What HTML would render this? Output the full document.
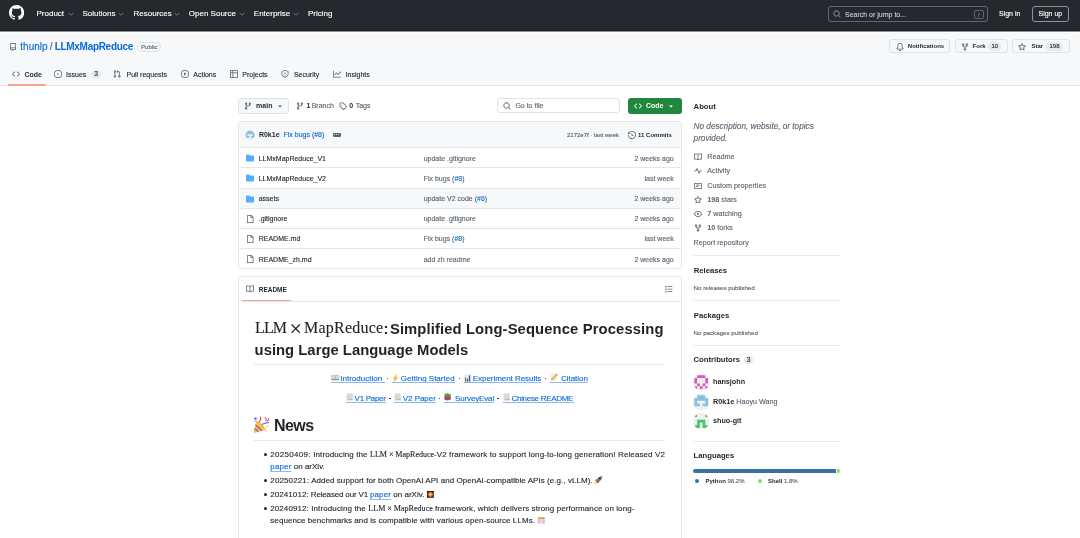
<!DOCTYPE html>
<html><head><meta charset="utf-8">
<style>
*{box-sizing:border-box;margin:0;padding:0}
html,body{width:1080px;height:538px;overflow:hidden;background:#fff}
body{font-family:"Liberation Sans",sans-serif;color:#1f2328;position:relative}
.a{position:absolute;white-space:nowrap}
svg{display:block}
.hdr{position:absolute;left:0;top:0;width:1080px;height:32px;background:#25292e;box-shadow:inset 0 -1px 0 #8d9094,inset 0 -2px 0 #1d2126}
.nav{color:#fff;font-size:8px;line-height:10px;top:9.3px}
.chev{position:absolute;top:11.5px}
.sub{position:absolute;left:0;top:32px;width:1080px;height:54px;box-shadow:inset 0 1px 0 #fdfdfe;background:#f6f8fa;border-bottom:1px solid #e0e4e9}
.btn{position:absolute;border:1px solid #dfe3e8;border-radius:3px;background:#f6f8fa}
.cnt{position:absolute;background:#e6eaef;border-radius:6px;font-size:6px;line-height:9px;text-align:center;font-weight:700;color:#1f2328}
.tab{font-size:7px;line-height:10px;top:69.8px;color:#1f2328}
.ico{position:absolute;fill:#59636e}
.box{position:absolute;border:1px solid #e4e7eb;border-radius:3px;overflow:hidden}
.row{position:absolute;left:0;width:443px;height:20.18px;border-top:1px solid #e3e7eb}
.fn{position:absolute;left:19.7px;top:5.5px;font-size:7px;line-height:10px;color:#1f2328}
.cm{position:absolute;left:184.7px;top:5.5px;font-size:7px;line-height:10px;color:#59636e}
.tm{position:absolute;right:8.3px;top:5.5px;font-size:7px;line-height:10px;color:#59636e}
.lk{color:#0969da}
.side{font-size:7.2px;line-height:10px;color:#59636e}
.sh{font-size:7.7px;line-height:10px;font-weight:700;color:#1f2328}
.sep{position:absolute;left:693px;width:147px;height:1px;background:#e8ebee}

.md a{color:#0969da;text-decoration:underline;text-decoration-thickness:0.5px;text-underline-offset:1.5px}
.li{position:relative;margin-bottom:2px}
.li::before{content:"";position:absolute;left:-6.2px;top:5px;width:2.4px;height:2.4px;border-radius:50%;background:#1f2328}
.mj{font-family:"Liberation Serif",serif;font-size:8.3px}
.emo{display:inline-block;vertical-align:-1px}
.wrap{will-change:transform}.wrap *{-webkit-text-stroke:0.12px currentColor}.wrap b,.wrap [style*="font-weight:700"],.sh,.fn[style*="font-weight:700"]{-webkit-text-stroke:0}</style></head><body><div class="wrap" style="position:absolute;left:0;top:0;width:1080px;height:538px;overflow:hidden">

<!-- header -->
<div class="hdr"></div>
<svg class="a" style="left:8.9px;top:5.4px" width="15.2" height="15.2" viewBox="0 0 16 16"><path fill="#fff" d="M8 0c4.42 0 8 3.58 8 8a8.013 8.013 0 0 1-5.45 7.59c-.4.08-.55-.17-.55-.38 0-.27.01-1.13.01-2.2 0-.75-.25-1.23-.54-1.48 1.780-.2 3.65-.88 3.65-3.950 0-.88-.31-1.59-.82-2.15.08-.2.36-1.02-.08-2.12 0 0-.67-.22-2.2.82-.64-.18-1.32-.27-2-.27-.68 0-1.36.09-2 .27-1.53-1.03-2.2-.82-2.2-.82-.44 1.1-.16 1.92-.08 2.12-.51.56-.82 1.28-.82 2.15 0 3.06 1.86 3.75 3.64 3.95-.23.2-.44.55-.51 1.07-.46.21-1.61.55-2.330-.66-.15-.24-.6-.83-1.23-.82-.67.01-.27.38.01.53.34.19.73.9.82 1.13.16.45.68 1.31 2.69.94 0 .67.01 1.3.01 1.49 0 .21-.15.45-.55.38A7.995 7.995 0 0 1 0 8c0-4.42 3.58-8 8-8Z"/></svg>
<div class="a nav" style="left:36.5px">Product</div>
<div class="a nav" style="left:82.5px">Solutions</div>
<div class="a nav" style="left:133.5px">Resources</div>
<div class="a nav" style="left:188.8px">Open Source</div>
<div class="a nav" style="left:253.8px">Enterprise</div>
<div class="a nav" style="left:308px">Pricing</div>
<svg class="chev" style="left:68px" width="6" height="4" viewBox="0 0 12 8"><path d="M1 1.5 6 6.5 11 1.5" fill="none" stroke="#9198a1" stroke-width="1.4"/></svg>
<svg class="chev" style="left:118px" width="6" height="4" viewBox="0 0 12 8"><path d="M1 1.5 6 6.5 11 1.5" fill="none" stroke="#9198a1" stroke-width="1.4"/></svg>
<svg class="chev" style="left:174px" width="6" height="4" viewBox="0 0 12 8"><path d="M1 1.5 6 6.5 11 1.5" fill="none" stroke="#9198a1" stroke-width="1.4"/></svg>
<svg class="chev" style="left:238.5px" width="6" height="4" viewBox="0 0 12 8"><path d="M1 1.5 6 6.5 11 1.5" fill="none" stroke="#9198a1" stroke-width="1.4"/></svg>
<svg class="chev" style="left:293px" width="6" height="4" viewBox="0 0 12 8"><path d="M1 1.5 6 6.5 11 1.5" fill="none" stroke="#9198a1" stroke-width="1.4"/></svg>

<div class="a" style="left:828.3px;top:6px;width:159.7px;height:16px;border:1px solid #5d656d;border-radius:3px"></div>
<svg class="a" style="left:833px;top:10px" width="8" height="8" viewBox="0 0 16 16"><path fill="#9198a1" d="M10.68 11.74a6 6 0 0 1-7.922-8.982 6 6 0 0 1 8.982 7.922l3.040 3.04a.749.749 0 0 1-.326 1.275.749.749 0 0 1-.734-.215ZM11.5 7a4.499 4.499 0 1 0-8.997 0A4.499 4.499 0 0 0 11.5 7Z"/></svg>
<div class="a" style="left:845px;top:9.5px;font-size:7px;line-height:10px;color:#c8ced5">Search or jump to...</div>
<div class="a" style="left:974px;top:9.5px;width:9.5px;height:9.5px;border:1px solid #5d656d;border-radius:2px;font-size:6px;line-height:8.5px;text-align:center;color:#9198a1">/</div>
<div class="a" style="left:999px;top:9.3px;font-size:7px;line-height:10px;color:#fff">Sign in</div>
<div class="a" style="left:1032.3px;top:6px;width:37px;height:15.7px;border:1px solid #8c959f;border-radius:3px"></div>
<div class="a" style="left:1038.5px;top:9.3px;font-size:7px;line-height:10px;color:#fff">Sign up</div>

<!-- subheader -->
<div class="sub"></div>
<svg class="a" style="left:9px;top:43px" width="8" height="8" viewBox="0 0 16 16"><path fill="#59636e" d="M2 2.5A2.5 2.5 0 0 1 4.5 0h8.75a.75.75 0 0 1 .75.75v12.5a.75.75 0 0 1-.75.75h-2.5a.75.75 0 0 1 0-1.5h1.75v-2h-8a1 1 0 0 0-.714 1.7.75.75 0 1 1-1.072 1.05A2.495 2.495 0 0 1 2 11.5Zm10.5-1h-8a1 1 0 0 0-1 1v6.708A2.486 2.486 0 0 1 4.5 9h8ZM5 12.25a.25.25 0 0 1 .25-.25h3.5a.25.25 0 0 1 .25.25v3.25a.25.25 0 0 1-.4.2l-1.45-1.087a.249.249 0 0 0-.3 0L5.4 15.7a.25.25 0 0 1-.4-.2Z"/></svg>
<div class="a" style="left:20.3px;top:41.3px;font-size:10px;line-height:11px;color:#0969da">thunlp</div>
<div class="a" style="left:49.8px;top:41.3px;font-size:10px;line-height:11px;color:#59636e">/</div>
<div class="a" style="left:54.7px;top:41.3px;font-size:10px;line-height:11px;color:#0969da;font-weight:700;letter-spacing:-0.3px">LLMxMapReduce</div>
<div class="a" style="left:137.2px;top:42px;width:24.3px;height:10px;border:1px solid #dfe3e8;border-radius:5px;font-size:6.1px;line-height:7.6px;text-align:center;color:#59636e">Public</div>

<div class="btn" style="left:889.3px;top:39.3px;width:61px;height:13.8px"></div>
<svg class="a" style="left:896px;top:42.5px" width="8" height="8" viewBox="0 0 16 16"><path fill="#59636e" d="M8 16a2 2 0 0 0 1.985-1.75c.017-.137-.097-.25-.235-.25h-3.5c-.138 0-.252.113-.235.25A2 2 0 0 0 8 16ZM3 5a5 5 0 0 1 10 0v2.947c0 .05.015.098.042.139l1.703 2.555A1.519 1.519 0 0 1 13.482 13H2.518a1.516 1.516 0 0 1-1.263-2.360l1.703-2.554A.255.255 0 0 0 3 7.947Zm5-3.5A3.500 3.5 0 0 0 4.5 5v2.947c0 .346-.102.683-.294.97l-1.703 2.556a.017.017 0 0 0-.003.01l.001.006c0 .002.002.004.004.006l.006.004.007.001h10.964l.007-.001.006-.004.004-.006.001-.007a.017.017 0 0 0-.003-.01l-1.703-2.554a1.745 1.745 0 0 1-.294-.97V5A3.5 3.5 0 0 0 8 1.5Z"/></svg>
<div class="a" style="left:907.8px;top:40.9px;font-size:6px;line-height:10px;font-weight:700;color:#1f2328">Notifications</div>

<div class="btn" style="left:954.6px;top:39.3px;width:53px;height:13.8px"></div>
<svg class="a" style="left:961px;top:42.5px" width="8" height="8" viewBox="0 0 16 16"><path fill="#59636e" d="M5 5.372v.878c0 .414.336.75.75.75h4.5a.75.75 0 0 0 .75-.75v-.878a2.25 2.25 0 1 1 1.5 0v.878a2.25 2.25 0 0 1-2.25 2.25h-1.5v2.128a2.251 2.251 0 1 1-1.5 0V8.5h-1.5A2.25 2.25 0 0 1 3.5 6.25v-.878a2.25 2.25 0 1 1 1.5 0ZM5 3.25a.75.75 0 1 0-1.5 0 .75.75 0 0 0 1.5 0Zm6.75.75a.75.75 0 1 0 0-1.5.75.75 0 0 0 0 1.5Zm-3 8.75a.75.75 0 1 0-1.5 0 .75.75 0 0 0 1.5 0Z"/></svg>
<div class="a" style="left:972.6px;top:40.9px;font-size:6px;line-height:10px;font-weight:700;color:#1f2328">Fork</div>
<div class="cnt" style="left:988.3px;top:42px;width:13px;height:9px;font-weight:400">10</div>

<div class="btn" style="left:1011.5px;top:39.3px;width:58px;height:13.8px"></div>
<svg class="a" style="left:1017.7px;top:42.5px" width="8" height="8" viewBox="0 0 16 16"><path fill="#59636e" d="M8 .25a.75.75 0 0 1 .673.418l1.882 3.815 4.21.612a.75.75 0 0 1 .416 1.279l-3.046 2.970.719 4.192a.751.751 0 0 1-1.088.791L8 12.347l-3.766 1.98a.75.75 0 0 1-1.088-.79l.72-4.194L.818 6.374a.75.75 0 0 1 .416-1.28l4.21-.611L7.327.668A.75.75 0 0 1 8 .25Zm0 2.445L6.615 5.5a.75.75 0 0 1-.564.41l-3.097.45 2.240 2.184a.75.75 0 0 1 .216.664l-.528 3.084 2.769-1.456a.75.75 0 0 1 .698 0l2.77 1.456-.53-3.084a.75.75 0 0 1 .216-.664l2.24-2.183-3.096-.45a.75.75 0 0 1-.564-.41L8 2.694Z"/></svg>
<div class="a" style="left:1031.5px;top:40.9px;font-size:6px;line-height:10px;font-weight:700;color:#1f2328">Star</div>
<div class="cnt" style="left:1046px;top:42px;width:17px;height:9px;font-weight:400">198</div>

<!-- tabs -->
<svg class="a ico" style="left:12px;top:70.3px" width="8" height="8" viewBox="0 0 16 16"><path d="m11.28 3.22 4.25 4.25a.75.75 0 0 1 0 1.06l-4.25 4.25a.749.749 0 0 1-1.275-.326.749.749 0 0 1 .215-.734L13.94 8l-3.72-3.720a.749.749 0 0 1 .326-1.275.749.749 0 0 1 .734.215Zm-6.56 0a.751.751 0 0 1 1.042.018.751.751 0 0 1 .018 1.042L2.060 8l3.72 3.72a.749.749 0 0 1-.326 1.275.749.749 0 0 1-.734-.215L.47 8.53a.75.75 0 0 1 0-1.06Z"/></svg>
<div class="a tab" style="left:24.4px;font-weight:700">Code</div>
<div class="a" style="left:8.3px;top:84.2px;width:37.4px;height:1.6px;background:#f6a490;border-radius:1px"></div>
<svg class="a ico" style="left:53.7px;top:70.3px" width="8" height="8" viewBox="0 0 16 16"><path d="M8 9.5a1.5 1.5 0 1 0 0-3 1.5 1.5 0 0 0 0 3Z"/><path d="M8 0a8 8 0 1 1 0 16A8 8 0 0 1 8 0ZM1.5 8a6.5 6.5 0 1 0 13 0 6.5 6.5 0 0 0-13 0Z"/></svg>
<div class="a tab" style="left:66.1px">Issues</div>
<div class="cnt" style="left:91px;top:70px;width:10px;height:8.7px;font-weight:400;line-height:8.7px;font-size:6.6px">3</div>
<svg class="a ico" style="left:113px;top:70.3px" width="8" height="8" viewBox="0 0 16 16"><path d="M1.5 3.25a2.25 2.25 0 1 1 3 2.122v5.256a2.251 2.251 0 1 1-1.5 0V5.372A2.25 2.25 0 0 1 1.5 3.25Zm5.677-.177L9.573.677A.25.25 0 0 1 10 .854V2.5h1A2.5 2.5 0 0 1 13.5 5v5.628a2.251 2.251 0 1 1-1.5 0V5a1 1 0 0 0-1-1h-1v1.646a.25.25 0 0 1-.427.177L7.177 3.427a.25.25 0 0 1 0-.354ZM3.75 2.5a.75.75 0 1 0 0 1.5.75.75 0 0 0 0-1.5Zm0 9.5a.75.75 0 1 0 0 1.5.75.75 0 0 0 0-1.5Zm8.25.75a.75.75 0 1 0 1.5 0 .75.75 0 0 0-1.5 0Z"/></svg>
<div class="a tab" style="left:126.5px">Pull requests</div>
<svg class="a ico" style="left:180.6px;top:70.3px" width="8" height="8" viewBox="0 0 16 16"><path d="M8 0a8 8 0 1 1 0 16A8 8 0 0 1 8 0ZM1.5 8a6.5 6.5 0 1 0 13 0 6.5 6.5 0 0 0-13 0Zm4.879-2.773 4.264 2.559a.25.25 0 0 1 0 .428l-4.264 2.559A.25.25 0 0 1 6 10.559V5.442a.25.25 0 0 1 .379-.215Z"/></svg>
<div class="a tab" style="left:193.3px">Actions</div>
<svg class="a ico" style="left:229.5px;top:70.3px" width="8" height="8" viewBox="0 0 16 16"><path d="M0 1.75C0 .784.784 0 1.75 0h12.5C15.216 0 16 .784 16 1.75v12.5A1.75 1.75 0 0 1 14.25 16H1.75A1.75 1.75 0 0 1 0 14.25ZM6.5 6.5v8h7.75a.25.25 0 0 0 .25-.25V6.5Zm8-1.5V1.75a.25.25 0 0 0-.25-.25H6.5V5Zm-13 1.5v7.750c0 .138.112.25.25.25H5v-8ZM5 5V1.5H1.75a.25.25 0 0 0-.25.25V5Z"/></svg>
<div class="a tab" style="left:242.3px">Projects</div>
<svg class="a ico" style="left:280.7px;top:70.3px" width="8" height="8" viewBox="0 0 16 16"><path d="M7.467.133a1.748 1.748 0 0 1 1.066 0l5.25 1.68A1.75 1.75 0 0 1 15 3.48V7c0 1.566-.32 3.182-1.303 4.682-.983 1.498-2.585 2.813-5.032 3.855a1.697 1.697 0 0 1-1.33 0c-2.447-1.042-4.049-2.357-5.032-3.855C1.32 10.182 1 8.566 1 7V3.48a1.755 1.755 0 0 1 1.217-1.667Zm.61 1.429a.25.25 0 0 0-.153 0l-5.25 1.68a.25.25 0 0 0-.174.238V7c0 1.358.275 2.666 1.057 3.86.784 1.194 2.121 2.34 4.366 3.297a.196.196 0 0 0 .154 0c2.245-.956 3.582-2.104 4.366-3.298C13.225 9.666 13.500 8.36 13.5 7V3.48a.251.251 0 0 0-.174-.237l-5.25-1.68ZM8.75 4.75v3a.75.75 0 0 1-1.5 0v-3a.75.75 0 0 1 1.5 0ZM9 10.5a1 1 0 1 1-2 0 1 1 0 0 1 2 0Z"/></svg>
<div class="a tab" style="left:293.9px">Security</div>
<svg class="a ico" style="left:332.5px;top:70.3px" width="8" height="8" viewBox="0 0 16 16"><path d="M1.5 1.75V13.5h13.75a.75.75 0 0 1 0 1.5H.75a.75.75 0 0 1-.75-.75V1.75a.75.75 0 0 1 1.5 0Zm14.28 2.53-5.25 5.25a.75.75 0 0 1-1.06 0L7 7.06 4.28 9.78a.751.751 0 0 1-1.042-.018.751.751 0 0 1-.018-1.042l3.25-3.25a.75.75 0 0 1 1.06 0L10 7.94l4.72-4.72a.751.751 0 0 1 1.042.018.751.751 0 0 1 .018 1.042Z"/></svg>
<div class="a tab" style="left:345.6px">Insights</div>

<!-- branch bar -->
<div class="btn" style="left:238.2px;top:98.2px;width:51.3px;height:15.4px"></div>
<svg class="a ico" style="left:243.7px;top:101.9px" width="8" height="8" viewBox="0 0 16 16"><path d="M9.5 3.25a2.25 2.25 0 1 1 3 2.122V6A2.5 2.5 0 0 1 10 8.5H6a1 1 0 0 0-1 1v1.128a2.251 2.251 0 1 1-1.5 0V5.372a2.25 2.25 0 1 1 1.5 0v1.836A2.493 2.493 0 0 1 6 7h4a1 1 0 0 0 1-1v-.628A2.25 2.25 0 0 1 9.5 3.25Zm-6 0a.75.75 0 1 0 1.5 0 .75.75 0 0 0-1.5 0Zm8.25-.75a.75.75 0 1 0 0 1.5.75.75 0 0 0 0-1.5ZM4.25 12a.75.75 0 1 0 0 1.5.75.75 0 0 0 0-1.5Z"/></svg>
<div class="a" style="left:256.1px;top:100.8px;font-size:7px;line-height:10px;font-weight:700">main</div>
<svg class="a ico" style="left:275.7px;top:101.9px" width="8" height="8" viewBox="0 0 16 16"><path d="m4.427 7.427 3.396 3.396a.25.25 0 0 0 .354 0l3.396-3.396A.25.25 0 0 0 11.396 7H4.604a.25.25 0 0 0-.177.427Z"/></svg>
<svg class="a ico" style="left:296px;top:101.9px" width="8" height="8" viewBox="0 0 16 16"><path d="M9.5 3.25a2.25 2.25 0 1 1 3 2.122V6A2.5 2.5 0 0 1 10 8.5H6a1 1 0 0 0-1 1v1.128a2.251 2.251 0 1 1-1.5 0V5.372a2.25 2.25 0 1 1 1.5 0v1.836A2.493 2.493 0 0 1 6 7h4a1 1 0 0 0 1-1v-.628A2.25 2.25 0 0 1 9.5 3.25Zm-6 0a.75.75 0 1 0 1.5 0 .75.75 0 0 0-1.5 0Zm8.25-.75a.75.75 0 1 0 0 1.5.75.75 0 0 0 0-1.5ZM4.25 12a.75.75 0 1 0 0 1.5.75.75 0 0 0 0-1.5Z"/></svg>
<div class="a" style="left:306.5px;top:100.8px;font-size:7px;line-height:10px;font-weight:700">1</div>
<div class="a" style="left:311.7px;top:100.8px;font-size:7px;line-height:10px;color:#59636e">Branch</div>
<svg class="a ico" style="left:339.3px;top:101.9px" width="8" height="8" viewBox="0 0 16 16"><path d="M1 7.775V2.75C1 1.784 1.784 1 2.75 1h5.025c.464 0 .91.184 1.238.513l6.25 6.25a1.75 1.75 0 0 1 0 2.474l-5.026 5.026a1.75 1.75 0 0 1-2.474 0l-6.25-6.25A1.752 1.752 0 0 1 1 7.775Zm1.5 0c0 .066.026.13.073.177l6.25 6.25a.25.25 0 0 0 .354 0l5.025-5.025a.25.25 0 0 0 0-.354l-6.25-6.25a.25.25 0 0 0-.177-.073H2.75a.25.25 0 0 0-.25.25ZM6 5a1 1 0 1 1 0 2 1 1 0 0 1 0-2Z"/></svg>
<div class="a" style="left:349.2px;top:100.8px;font-size:7px;line-height:10px;font-weight:700">0</div>
<div class="a" style="left:355.7px;top:100.8px;font-size:7px;line-height:10px;color:#59636e">Tags</div>

<div class="a" style="left:497.4px;top:98px;width:122.2px;height:15.4px;border:1px solid #dfe3e8;border-radius:3px;background:#fff"></div>
<svg class="a ico" style="left:503px;top:101.8px" width="8" height="8" viewBox="0 0 16 16"><path d="M10.68 11.74a6 6 0 0 1-7.922-8.982 6 6 0 0 1 8.982 7.922l3.040 3.04a.749.749 0 0 1-.326 1.275.749.749 0 0 1-.734-.215ZM11.5 7a4.499 4.499 0 1 0-8.997 0A4.499 4.499 0 0 0 11.5 7Z"/></svg>
<div class="a" style="left:515.4px;top:100.7px;font-size:7px;line-height:10px;color:#59636e">Go to file</div>
<div class="a" style="left:628px;top:98px;width:53.6px;height:15.8px;border-radius:3px;background:#1f883d"></div>
<svg class="a" style="left:634px;top:102px" width="8" height="8" viewBox="0 0 16 16"><path fill="#fff" d="m11.28 3.22 4.25 4.25a.75.75 0 0 1 0 1.06l-4.25 4.25a.749.749 0 0 1-1.275-.326.749.749 0 0 1 .215-.734L13.94 8l-3.72-3.720a.749.749 0 0 1 .326-1.275.749.749 0 0 1 .734.215Zm-6.56 0a.751.751 0 0 1 1.042.018.751.751 0 0 1 .018 1.042L2.060 8l3.72 3.72a.749.749 0 0 1-.326 1.275.749.749 0 0 1-.734-.215L.47 8.53a.75.75 0 0 1 0-1.06Z"/></svg>
<div class="a" style="left:645.9px;top:100.7px;font-size:7px;line-height:10px;font-weight:700;color:#fff">Code</div>
<svg class="a" style="left:667px;top:101.8px" width="8" height="8" viewBox="0 0 16 16"><path fill="#fff" d="m4.427 7.427 3.396 3.396a.25.25 0 0 0 .354 0l3.396-3.396A.25.25 0 0 0 11.396 7H4.604a.25.25 0 0 0-.177.427Z"/></svg>

<!-- file table -->
<div class="box" style="left:238px;top:121px;width:444px;height:148px">
  <div style="position:absolute;left:0;top:0;width:443px;height:26.2px;background:#f6f8fa"></div>
  <svg class="a" style="left:5.60px;top:8.40px" width="10.2" height="10.2" viewBox="0 0 420 420"><clipPath id="c6.69.2"><circle cx="210" cy="210" r="210"/></clipPath><g clip-path="url(#c6.69.2)"><rect width="420" height="420" fill="#f0f0f0"/><path d="M105 35h70v70h-70ZM175 35h70v70h-70ZM245 35h70v70h-70ZM35 105h70v70h-70ZM105 105h70v70h-70ZM175 105h70v70h-70ZM245 105h70v70h-70ZM315 105h70v70h-70ZM35 175h70v70h-70ZM315 175h70v70h-70ZM35 245h70v70h-70ZM105 245h70v70h-70ZM245 245h70v70h-70ZM315 245h70v70h-70Z" fill="#8cc1dd"/></g><circle cx="210" cy="210" r="208" fill="none" stroke="#e3e6e9" stroke-width="8"/></svg>
  <div class="a" style="left:19.90px;top:8.20px;font-size:7px;line-height:10px;font-weight:700">R0k1e</div>
  <div class="a" style="left:44.50px;top:8.20px;font-size:7px;line-height:10px;color:#0969da">Fix bugs (#8)</div>
  <div class="a" style="left:93.50px;top:10.60px;width:8px;height:4.4px;border-radius:1.2px;background:#59636e"></div>
  <div class="a" style="left:95.00px;top:12.20px;width:1.1px;height:1.1px;background:#fff;border-radius:50%"></div>
  <div class="a" style="left:97.00px;top:12.20px;width:1.1px;height:1.1px;background:#fff;border-radius:50%"></div>
  <div class="a" style="left:99.00px;top:12.20px;width:1.1px;height:1.1px;background:#fff;border-radius:50%"></div>
  <div class="a" style="left:328.00px;top:8.40px;font-size:6px;line-height:10px;color:#59636e">2172e7f · last week</div>
  <svg class="a ico" style="left:388.80px;top:9.40px" width="8" height="8" viewBox="0 0 16 16"><path d="m.427 1.927 1.215 1.215a8.002 8.002 0 1 1-1.6 5.685.75.75 0 1 1 1.493-.154 6.5 6.5 0 1 0 1.18-4.458l1.358 1.358A.25.25 0 0 1 3.896 6H.25A.25.25 0 0 1 0 5.750V2.104a.25.25 0 0 1 .427-.177ZM7.75 4a.75.75 0 0 1 .75.75v2.992l2.028.812a.75.75 0 0 1-.557 1.392l-2.5-1A.751.751 0 0 1 7 8.25v-3.5A.75.75 0 0 1 7.75 4Z"/></svg>
  <div class="a" style="left:399.10px;top:8.40px;font-size:6px;line-height:10px;font-weight:700">11 Commits</div>
  <div class="row" style="top:25.20px;"><svg class="a" style="left:6.9px;top:6.1px" width="8" height="8" viewBox="0 0 16 16"><path fill="#54aeff" d="M1.75 1A1.75 1.75 0 0 0 0 2.75v10.5C0 14.216.784 15 1.75 15h12.5A1.75 1.75 0 0 0 16 13.25v-8.5A1.75 1.75 0 0 0 14.25 3H7.5a.25.25 0 0 1-.2-.1l-.9-1.2C6.07 1.26 5.55 1 5 1H1.75Z"/></svg><div class="fn">LLMxMapReduce_V1</div><div class="cm">update .gitignore</div><div class="tm">2 weeks ago</div></div>
<div class="row" style="top:45.38px;"><svg class="a" style="left:6.9px;top:6.1px" width="8" height="8" viewBox="0 0 16 16"><path fill="#54aeff" d="M1.75 1A1.75 1.75 0 0 0 0 2.75v10.5C0 14.216.784 15 1.75 15h12.5A1.75 1.75 0 0 0 16 13.25v-8.5A1.75 1.75 0 0 0 14.25 3H7.5a.25.25 0 0 1-.2-.1l-.9-1.2C6.07 1.26 5.55 1 5 1H1.75Z"/></svg><div class="fn">LLMxMapReduce_V2</div><div class="cm">Fix bugs (<span class="lk">#8</span>)</div><div class="tm">last week</div></div>
<div class="row" style="top:65.56px;background:#f6f8fa;"><svg class="a" style="left:6.9px;top:6.1px" width="8" height="8" viewBox="0 0 16 16"><path fill="#54aeff" d="M1.75 1A1.75 1.75 0 0 0 0 2.75v10.5C0 14.216.784 15 1.75 15h12.5A1.75 1.75 0 0 0 16 13.25v-8.5A1.75 1.75 0 0 0 14.25 3H7.5a.25.25 0 0 1-.2-.1l-.9-1.2C6.07 1.26 5.55 1 5 1H1.75Z"/></svg><div class="fn">assets</div><div class="cm">update V2 code (<span class="lk">#6</span>)</div><div class="tm">2 weeks ago</div></div>
<div class="row" style="top:85.74px;"><svg class="a ico" style="left:6.9px;top:6.1px" width="8" height="8" viewBox="0 0 16 16"><path d="M2 1.75C2 .784 2.784 0 3.75 0h6.586c.464 0 .909.184 1.237.513l2.914 2.914c.329.328.513.773.513 1.237v9.586A1.75 1.75 0 0 1 13.25 16h-9.5A1.75 1.75 0 0 1 2 14.25Zm1.75-.25a.25.25 0 0 0-.25.25v12.5c0 .138.112.25.25.25h9.5a.25.25 0 0 0 .25-.25V6h-2.750A1.75 1.75 0 0 1 9 4.25V1.5Zm6.75.062V4.25c0 .138.112.25.25.25h2.688l-.011-.013-2.914-2.914-.013-.011Z"/></svg><div class="fn">.gitignore</div><div class="cm">update .gitignore</div><div class="tm">2 weeks ago</div></div>
<div class="row" style="top:105.92px;"><svg class="a ico" style="left:6.9px;top:6.1px" width="8" height="8" viewBox="0 0 16 16"><path d="M2 1.75C2 .784 2.784 0 3.75 0h6.586c.464 0 .909.184 1.237.513l2.914 2.914c.329.328.513.773.513 1.237v9.586A1.75 1.75 0 0 1 13.25 16h-9.5A1.75 1.75 0 0 1 2 14.25Zm1.75-.25a.25.25 0 0 0-.25.25v12.5c0 .138.112.25.25.25h9.5a.25.25 0 0 0 .25-.25V6h-2.750A1.75 1.75 0 0 1 9 4.25V1.5Zm6.75.062V4.25c0 .138.112.25.25.25h2.688l-.011-.013-2.914-2.914-.013-.011Z"/></svg><div class="fn">README.md</div><div class="cm">Fix bugs (<span class="lk">#8</span>)</div><div class="tm">last week</div></div>
<div class="row" style="top:126.10px;"><svg class="a ico" style="left:6.9px;top:6.1px" width="8" height="8" viewBox="0 0 16 16"><path d="M2 1.75C2 .784 2.784 0 3.75 0h6.586c.464 0 .909.184 1.237.513l2.914 2.914c.329.328.513.773.513 1.237v9.586A1.75 1.75 0 0 1 13.25 16h-9.5A1.75 1.75 0 0 1 2 14.25Zm1.75-.25a.25.25 0 0 0-.25.25v12.5c0 .138.112.25.25.25h9.5a.25.25 0 0 0 .25-.25V6h-2.750A1.75 1.75 0 0 1 9 4.25V1.5Zm6.75.062V4.25c0 .138.112.25.25.25h2.688l-.011-.013-2.914-2.914-.013-.011Z"/></svg><div class="fn">README_zh.md</div><div class="cm">add zh readme</div><div class="tm">2 weeks ago</div></div>

</div>

<!-- readme -->
<div class="box" style="left:238px;top:276px;width:444px;height:300px;background:#fff"></div>
<div class="a" style="left:238.5px;top:300.6px;width:443px;height:1px;background:#e3e7eb"></div>
<div class="a" style="left:242px;top:299.8px;width:49px;height:1.6px;background:#f6a490;border-radius:1px"></div>
<svg class="a ico" style="left:246.2px;top:284.6px" width="8" height="8" viewBox="0 0 16 16"><path d="M0 1.75A.75.75 0 0 1 .75 1h4.253c1.227 0 2.317.59 3 1.501A3.743 3.743 0 0 1 11.006 1h4.245a.75.75 0 0 1 .75.75v10.5a.75.75 0 0 1-.75.75h-4.507a2.25 2.25 0 0 0-1.591.659l-.622.621a.75.75 0 0 1-1.060 0l-.622-.621A2.25 2.25 0 0 0 5.258 13H.75a.75.75 0 0 1-.75-.75Zm7.251 10.324.004-5.073-.002-2.253A2.25 2.25 0 0 0 5.003 2.5H1.5v9h3.757a3.75 3.75 0 0 1 1.994.574ZM8.755 4.75l-.004 7.322a3.752 3.752 0 0 1 1.992-.572H14.5v-9h-3.495a2.25 2.25 0 0 0-2.25 2.25Z"/></svg>
<div class="a" style="left:258.7px;top:284.7px;font-size:6.5px;line-height:10px;font-weight:700">README</div>
<svg class="a ico" style="left:664.5px;top:284.9px" width="8" height="8" viewBox="0 0 16 16"><path d="M5.75 2.5h8.5a.75.75 0 0 1 0 1.5h-8.5a.75.75 0 0 1 0-1.5Zm0 5h8.5a.75.75 0 0 1 0 1.5h-8.5a.75.75 0 0 1 0-1.5Zm0 5h8.5a.75.75 0 0 1 0 1.5h-8.5a.75.75 0 0 1 0-1.5Z"/><circle cx="2" cy="3.25" r="1.5"/><circle cx="2" cy="8.25" r="1.5"/><circle cx="2" cy="13.25" r="1.5"/></svg>

<div class="a" style="letter-spacing:-0.860px;left:255.0px;top:318.30px;font-size:16px;line-height:20.2px;white-space:pre;font-family:'Liberation Serif',serif">LLM</div>
<svg class="a" style="left:290.6px;top:324.2px" width="9.4" height="9.4" viewBox="0 0 10 10"><path d="M0.6 0.6 9.4 9.4M9.4 0.6 0.6 9.4" stroke="#1f2328" stroke-width="1.35"/></svg>
<div class="a" style="letter-spacing:0.232px;left:304.0px;top:318.30px;font-size:16px;line-height:20.2px;white-space:pre;font-family:'Liberation Serif',serif">MapReduce</div>
<div class="a" style="left:383.4px;top:319.37px;font-size:14.8px;line-height:20.2px;white-space:pre;font-weight:700">:</div>
<div class="a" style="letter-spacing:0.115px;left:389.9px;top:319.37px;font-size:14.8px;line-height:20.2px;white-space:pre;font-weight:700">Simplified Long-Sequence Processing</div>
<div class="a" style="letter-spacing:0.025px;left:254.6px;top:339.57px;font-size:14.8px;line-height:20.2px;white-space:pre;font-weight:700">using Large Language Models</div>
<div class="a" style="left:254px;top:364px;width:411px;height:1px;background:#e6e9ec"></div>

<svg class="a" style="left:331px;top:374px" width="8.5" height="7" viewBox="0 0 19 16"><path d="M1 3.5 Q5 2 9.3 3.5 V12.5 Q5 11 1 12.5Z" fill="#d9dbdd" stroke="#8c9196" stroke-width="0.9"/><path d="M9.7 3.5 Q14 2 18 3.5 V12.5 Q14 11 9.7 12.5Z" fill="#d9dbdd" stroke="#8c9196" stroke-width="0.9"/><path d="M1 12.5 Q5 11 9.5 12.5 Q14 11 18 12.5 V14.5 H1Z" fill="#5f7f7a"/></svg>
<div class="a" style="left:340.3px;top:374.33px;font-size:8px;line-height:10px;color:#0969da">Introduction</div>
<div class="a" style="left:330.8px;top:382.2px;width:54.5px;height:0.8px;background:#8fb8ec"></div>
<div class="a" style="left:386.6px;top:377.5px;width:1.6px;height:1.6px;border-radius:50%;background:#1f2328"></div>
<svg class="a" style="left:392.2px;top:373.6px" width="6.8" height="8.6" viewBox="0 0 14 18"><path d="M10 0 2 10h4.5L3.5 18 12 7H7.5Z" fill="#f7c02b" stroke="#f29a1a" stroke-width="0.6"/></svg>
<div class="a" style="left:400.8px;top:374.33px;font-size:8px;line-height:10px;color:#0969da">Getting Started</div>
<div class="a" style="left:392px;top:382.2px;width:63.0px;height:0.8px;background:#8fb8ec"></div>
<div class="a" style="left:458.8px;top:377.5px;width:1.6px;height:1.6px;border-radius:50%;background:#1f2328"></div>
<svg class="a" style="left:463.8px;top:373.8px" width="7.2" height="8.2" viewBox="0 0 16 17"><rect x="0.5" y="0.5" width="15" height="16" fill="#e9ecef"/><rect x="2" y="7" width="2.8" height="9.5" fill="#2fa53a"/><rect x="6.4" y="10" width="2.8" height="6.5" fill="#d8262b"/><rect x="10.8" y="2.5" width="3" height="14" fill="#1b5fbf"/></svg>
<div class="a" style="left:472.8px;top:374.33px;font-size:8px;line-height:10px;color:#0969da;letter-spacing:-0.05px">Experiment Results</div>
<div class="a" style="left:463.5px;top:382.2px;width:77.8px;height:0.8px;background:#8fb8ec"></div>
<div class="a" style="left:544.6px;top:377.5px;width:1.6px;height:1.6px;border-radius:50%;background:#1f2328"></div>
<svg class="a" style="left:550px;top:373.3px" width="8.2" height="8.6" viewBox="0 0 17 17"><rect x="1" y="1" width="13" height="15" fill="#ececec"/><path d="M3 14.5 4 10.5 12.5 2 15 4.5 6.5 13Z" fill="#f2c12e" stroke="#c98a1a" stroke-width="0.6"/><path d="M12.5 2 14 0.8 16.2 3 15 4.5Z" fill="#e9788a"/></svg>
<div class="a" style="left:560.9px;top:374.33px;font-size:8px;line-height:10px;color:#0969da">Citation</div>
<div class="a" style="left:550px;top:382.2px;width:38.2px;height:0.8px;background:#8fb8ec"></div>
<svg class="a" style="left:345.7px;top:393.2px" width="7.3" height="7.6" viewBox="0 0 15 16"><path d="M1 1H14V13Q8 12.5 1 15Z" fill="#d8d8d8"/><path d="M1 15Q8 12.5 14 13V15.5H1Z" fill="#9a9a9a"/></svg>
<div class="a" style="left:354.6px;top:393.83px;font-size:8px;line-height:10px;color:#0969da;letter-spacing:-0.3px">V1 Paper</div>
<div class="a" style="left:345.7px;top:402.2px;width:40.0px;height:0.8px;background:#8fb8ec"></div>
<div class="a" style="left:389.0px;top:397.6px;width:1.6px;height:1.6px;border-radius:50%;background:#1f2328"></div>
<svg class="a" style="left:394.3px;top:393.2px" width="7.3" height="7.6" viewBox="0 0 15 16"><path d="M1 1H14V13Q8 12.5 1 15Z" fill="#d8d8d8"/><path d="M1 15Q8 12.5 14 13V15.5H1Z" fill="#9a9a9a"/></svg>
<div class="a" style="left:402.8px;top:393.83px;font-size:8px;line-height:10px;color:#0969da;letter-spacing:-0.05px">V2 Paper</div>
<div class="a" style="left:394.4px;top:402.2px;width:41.4px;height:0.8px;background:#8fb8ec"></div>
<div class="a" style="left:438.9px;top:397.6px;width:1.6px;height:1.6px;border-radius:50%;background:#1f2328"></div>
<svg class="a" style="left:444.3px;top:393.4px" width="7.2" height="7.6" viewBox="0 0 15 16"><path d="M1 9 L7 7 L14 9 L14 14 L7 16 L1 14Z" fill="#6a5fb8"/><path d="M1 6 L7 4.5 L14 6 L14 11 L7 12.5 L1 11Z" fill="#d6393a"/><path d="M0.5 2.5 L7 0.5 L14.5 3 L14 6.5 L7 8 L1 6Z" fill="#3eab43"/></svg>
<div class="a" style="left:455px;top:393.83px;font-size:8px;line-height:10px;color:#0969da;letter-spacing:-0.14px">SurveyEval</div>
<div class="a" style="left:444px;top:402.2px;width:50.1px;height:0.8px;background:#8fb8ec"></div>
<div class="a" style="left:497.3px;top:397.6px;width:1.6px;height:1.6px;border-radius:50%;background:#1f2328"></div>
<svg class="a" style="left:502.6px;top:393.2px" width="7.3" height="7.6" viewBox="0 0 15 16"><path d="M1 1H14V13Q8 12.5 1 15Z" fill="#d8d8d8"/><path d="M1 15Q8 12.5 14 13V15.5H1Z" fill="#9a9a9a"/></svg>
<div class="a" style="left:511.5px;top:393.83px;font-size:8px;line-height:10px;color:#0969da;letter-spacing:-0.3px">Chinese README</div>
<div class="a" style="left:502.6px;top:402.2px;width:71.1px;height:0.8px;background:#8fb8ec"></div>

<svg class="a" style="left:253.4px;top:416.3px" width="17.6" height="17.6" viewBox="0 0 34 34">
<path d="M1 33 L6.5 9 Q16 13 25 26 Z" fill="#f4c12f"/>
<path d="M6.5 9 Q16 13 25 26 Q22 24 18 20 Q12 14 6.5 9Z" fill="#e7a52a"/>
<path d="M4.6 17.5 Q12 21 16.8 28.6" stroke="#a855d8" stroke-width="2.6" fill="none"/>
<path d="M3 24.5 Q7.5 26.5 10.5 31" stroke="#a855d8" stroke-width="2.4" fill="none"/>
<path d="M5.6 13 Q14 16.5 21 25" stroke="#f7d96a" stroke-width="1" fill="none"/>
<path d="M2 4 L6 2.5 L7.5 6.5 L3.5 8Z" fill="#3d7ff0"/>
<path d="M3 10.5 L7 9.5" stroke="#5b9cf5" stroke-width="1.6"/>
<path d="M13.5 1.5 Q16.5 5 13.5 8 Q12 10 13.5 12" stroke="#ec3f73" stroke-width="2.2" fill="none"/>
<path d="M22 4 Q26 2 25 7 Q24 10 28 9 Q31 8 30 4" stroke="#e9507f" stroke-width="2" fill="none"/>
<path d="M17 16 L31 12" stroke="#4a86f2" stroke-width="2.6"/>
<circle cx="27" cy="21" r="1.6" fill="#f3a45e"/><circle cx="29.5" cy="18" r="1.1" fill="#f5b878"/><circle cx="25.5" cy="28.5" r="1.5" fill="#eb8ec4"/><circle cx="9" cy="4" r="1" fill="#f5c52f"/>
</svg>
<div class="a" style="left:274px;top:416.2px;font-size:16px;line-height:20px;font-weight:700;letter-spacing:-0.55px">News</div>
<div class="a" style="left:254px;top:440.3px;width:411px;height:1px;background:#e6e9ec"></div>

<div class="a" style="left:263.6px;top:453.2px;width:3px;height:3px;border-radius:50%;background:#1f2328"></div>
<div class="a" style="letter-spacing:0.308px;left:270.3px;top:449.53px;font-size:8px;line-height:10px;">20250409:</div>
<div class="a" style="letter-spacing:0.101px;left:310.9px;top:449.53px;font-size:8px;line-height:10px;white-space:pre;"> Introducing the </div>
<div class="a" style="letter-spacing:-0.054px;left:370px;top:450.49px;font-size:8.1px;line-height:10px;font-family:'Liberation Serif',serif;">LLM × MapReduce</div>
<div class="a" style="letter-spacing:0.105px;left:434px;top:449.53px;font-size:8px;line-height:10px;">-V2 framework to support long-to-long generation! Released V2</div>
<div class="a" style="letter-spacing:0.146px;left:270.3px;top:462.33px;font-size:8px;line-height:10px;color:#0969da;text-decoration:underline;text-decoration-color:#8fb8ec;text-underline-offset:2.3px;text-decoration-thickness:0.8px">paper</div>
<div class="a" style="letter-spacing:0.010px;left:291.5px;top:462.33px;font-size:8px;line-height:10px;white-space:pre;"> on arXiv.</div>
<div class="a" style="left:263.6px;top:479.3px;width:3px;height:3px;border-radius:50%;background:#1f2328"></div>
<div class="a" style="letter-spacing:0.130px;left:270.3px;top:475.63px;font-size:8px;line-height:10px;">20250221:</div>
<div class="a" style="letter-spacing:0.055px;left:309.3px;top:475.63px;font-size:8px;line-height:10px;white-space:pre;"> Added support for both OpenAI API and OpenAI-compatible APIs (e.g., vLLM).</div>
<svg class="a" style="left:594.2px;top:475.4px" width="9.4" height="9.4" viewBox="0 0 18 18">
<path d="M1 17 Q0.8 13 3.8 11.5 L6.5 14.2 Q5 17.2 1 17Z" fill="#f7c531"/>
<path d="M2.6 9.6 Q5 7 8.6 7.6 L4.8 12.6 Q2.4 12 2.6 9.6Z" fill="#ef3a22"/>
<path d="M8.4 15.4 Q11 13 10.4 9.4 L5.4 13.2 Q6 15.6 8.4 15.4Z" fill="#e5191f"/>
<ellipse cx="10.6" cy="7.4" rx="6.4" ry="3.6" transform="rotate(-45 10.6 7.4)" fill="#7d8e9e"/>
<path d="M6 12.4 L9.6 8.8" stroke="#2f78d0" stroke-width="2.4"/>
<circle cx="11.2" cy="6.8" r="2" fill="#5d1420"/>
<path d="M13.4 2.4 Q16.5 0.6 17.4 0.6 Q17.4 1.5 15.6 4.6 Z" fill="#afd3f2"/>
</svg>
<div class="a" style="left:263.6px;top:493.3px;width:3px;height:3px;border-radius:50%;background:#1f2328"></div>
<div class="a" style="letter-spacing:0.064px;left:270.3px;top:489.63px;font-size:8px;line-height:10px;">20241012:</div>
<div class="a" style="letter-spacing:-0.156px;left:308.7px;top:489.63px;font-size:8px;line-height:10px;white-space:pre;"> Released our V1 </div>
<div class="a" style="letter-spacing:0.066px;left:370.1px;top:489.63px;font-size:8px;line-height:10px;color:#0969da;text-decoration:underline;text-decoration-color:#8fb8ec;text-underline-offset:2.3px;text-decoration-thickness:0.8px">paper</div>
<div class="a" style="letter-spacing:0.040px;left:390.9px;top:489.63px;font-size:8px;line-height:10px;white-space:pre;"> on arXiv.</div>
<svg class="a" style="left:427px;top:491px" width="6.8" height="6.8" viewBox="0 0 15 15"><defs><radialGradient id="bg1"><stop offset="0" stop-color="#fff6df"/><stop offset="0.35" stop-color="#f5a04a"/><stop offset="0.8" stop-color="#8a3b0c"/><stop offset="1" stop-color="#2a1508"/></radialGradient></defs><rect x="0" y="0" width="15" height="15" fill="url(#bg1)"/></svg>
<div class="a" style="left:263.6px;top:507.2px;width:3px;height:3px;border-radius:50%;background:#1f2328"></div>
<div class="a" style="letter-spacing:0.075px;left:270.3px;top:503.53px;font-size:8px;line-height:10px;">20240912:</div>
<div class="a" style="letter-spacing:0.125px;left:308.8px;top:503.53px;font-size:8px;line-height:10px;white-space:pre;"> Introducing the </div>
<div class="a" style="letter-spacing:-0.027px;left:368.3px;top:504.49px;font-size:8.1px;line-height:10px;font-family:'Liberation Serif',serif;">LLM × MapReduce</div>
<div class="a" style="letter-spacing:0.089px;left:432.7px;top:503.53px;font-size:8px;line-height:10px;white-space:pre;"> framework, which delivers strong performance on long-</div>
<div class="a" style="letter-spacing:0.067px;left:270.3px;top:515.73px;font-size:8px;line-height:10px;">sequence benchmarks and is compatible with various open-source LLMs.</div>
<svg class="a" style="left:536.6px;top:515.8px" width="8.8" height="8.6" viewBox="0 0 18 17">
<path d="M1 4.5 Q3 0 9 2.6 Q15 0 17.5 4.5 Q13.5 6.8 9 5.6 Q4.5 6.8 1 4.5Z" fill="#e9962f"/>
<path d="M2.5 6 Q1.5 10 3 15.5 M6.5 6 Q8 10 6 16 M10.5 6 Q9.5 11 11.5 16 M14.5 6 Q16 10 14.5 15" stroke="#f19bbf" stroke-width="1.7" fill="none"/>
<path d="M4.5 6 Q3.5 10 5 14 M12.5 6 Q13.5 10 12.5 14" stroke="#7fb0f2" stroke-width="1.5" fill="none"/>
<circle cx="16.5" cy="11" r="0.9" fill="#f7d36a"/>
</svg>

<!-- sidebar -->
<div class="a sh" style="left:693.6px;top:101.6px;font-size:7.7px">About</div>
<div class="a" style="left:693.6px;top:121px;font-size:8.2px;line-height:11.6px;font-style:italic;color:#59636e">No description, website, or topics<br>provided.</div>
<svg class="a ico" style="left:693.6px;top:152.5px" width="8" height="8" viewBox="0 0 16 16"><path d="M0 1.75A.75.75 0 0 1 .75 1h4.253c1.227 0 2.317.59 3 1.501A3.743 3.743 0 0 1 11.006 1h4.245a.75.75 0 0 1 .75.75v10.5a.75.75 0 0 1-.75.75h-4.507a2.25 2.25 0 0 0-1.591.659l-.622.621a.75.75 0 0 1-1.060 0l-.622-.621A2.25 2.25 0 0 0 5.258 13H.75a.75.75 0 0 1-.75-.75Zm7.251 10.324.004-5.073-.002-2.253A2.25 2.25 0 0 0 5.003 2.5H1.5v9h3.757a3.75 3.75 0 0 1 1.994.574ZM8.755 4.75l-.004 7.322a3.752 3.752 0 0 1 1.992-.572H14.5v-9h-3.495a2.25 2.25 0 0 0-2.25 2.25Z"/></svg>
<div class="a side" style="left:707.3px;top:151.5px">Readme</div>
<svg class="a ico" style="left:693.6px;top:166.8px" width="8" height="8" viewBox="0 0 16 16"><path d="M6 2c.306 0 .582.187.696.471L10 10.731l1.304-3.26A.751.751 0 0 1 12 7h3.25a.75.75 0 0 1 0 1.5h-2.742l-1.812 4.528a.751.751 0 0 1-1.392 0L6 4.77 4.696 8.030A.75.75 0 0 1 4 8.5H.75a.75.75 0 0 1 0-1.5h2.742l1.812-4.529A.751.751 0 0 1 6 2Z"/></svg>
<div class="a side" style="left:707.3px;top:165.8px">Activity</div>
<svg class="a ico" style="left:693.6px;top:181.5px" width="8" height="8" viewBox="0 0 16 16"><path d="M0 3.75C0 2.784.784 2 1.75 2h12.5c.966 0 1.75.784 1.75 1.75v8.5A1.75 1.75 0 0 1 14.25 14H1.75A1.75 1.75 0 0 1 0 12.25Zm1.75-.25a.25.25 0 0 0-.25.25v8.5c0 .138.112.25.25.25h12.5a.25.25 0 0 0 .25-.25v-8.5a.25.25 0 0 0-.25-.25ZM3.5 6.25a.75.75 0 0 1 .75-.75h7a.75.75 0 0 1 0 1.5h-7a.75.75 0 0 1-.75-.75Zm.75 2.25h4a.75.75 0 0 1 0 1.5h-4a.75.75 0 0 1 0-1.5Z"/></svg>
<div class="a side" style="left:707.3px;top:180.5px">Custom properties</div>
<svg class="a ico" style="left:693.6px;top:195.6px" width="8" height="8" viewBox="0 0 16 16"><path d="M8 .25a.75.75 0 0 1 .673.418l1.882 3.815 4.21.612a.75.75 0 0 1 .416 1.279l-3.046 2.970.719 4.192a.751.751 0 0 1-1.088.791L8 12.347l-3.766 1.98a.75.75 0 0 1-1.088-.79l.72-4.194L.818 6.374a.75.75 0 0 1 .416-1.28l4.21-.611L7.327.668A.75.75 0 0 1 8 .25Zm0 2.445L6.615 5.5a.75.75 0 0 1-.564.41l-3.097.45 2.240 2.184a.75.75 0 0 1 .216.664l-.528 3.084 2.769-1.456a.75.75 0 0 1 .698 0l2.77 1.456-.53-3.084a.75.75 0 0 1 .216-.664l2.24-2.183-3.096-.45a.75.75 0 0 1-.564-.41L8 2.694Z"/></svg>
<div class="a side" style="left:707.3px;top:194.6px"><b>198</b> stars</div>
<svg class="a ico" style="left:693.6px;top:209.9px" width="8" height="8" viewBox="0 0 16 16"><path d="M8 2c1.981 0 3.671.992 4.933 2.078 1.27 1.091 2.187 2.345 2.637 3.023a1.62 1.62 0 0 1 0 1.798c-.45.678-1.367 1.932-2.637 3.023C11.67 13.008 9.981 14 8 14c-1.981 0-3.671-.992-4.933-2.078C1.797 10.83.88 9.576.43 8.898a1.62 1.62 0 0 1 0-1.798c.45-.677 1.367-1.931 2.637-3.022C4.33 2.992 6.019 2 8 2ZM1.679 7.932a.12.12 0 0 0 0 .136c.411.622 1.241 1.75 2.366 2.717C5.176 11.758 6.527 12.5 8 12.5c1.473 0 2.825-.742 3.955-1.715 1.124-.967 1.954-2.096 2.366-2.717a.12.12 0 0 0 0-.136c-.412-.621-1.242-1.75-2.366-2.717C10.824 4.242 9.473 3.5 8 3.5c-1.473 0-2.825.742-3.955 1.715-1.124.967-1.954 2.096-2.366 2.717ZM8 10a2 2 0 1 1-.001-3.999A2 2 0 0 1 8 10Z"/></svg>
<div class="a side" style="left:707.3px;top:208.9px"><b>7</b> watching</div>
<svg class="a ico" style="left:693.6px;top:224.4px" width="8" height="8" viewBox="0 0 16 16"><path d="M5 5.372v.878c0 .414.336.75.75.75h4.5a.75.75 0 0 0 .75-.75v-.878a2.25 2.25 0 1 1 1.5 0v.878a2.25 2.25 0 0 1-2.25 2.25h-1.5v2.128a2.251 2.251 0 1 1-1.5 0V8.5h-1.5A2.25 2.25 0 0 1 3.5 6.25v-.878a2.25 2.25 0 1 1 1.5 0ZM5 3.25a.75.75 0 1 0-1.5 0 .75.75 0 0 0 1.5 0Zm6.75.75a.75.75 0 1 0 0-1.5.75.75 0 0 0 0 1.5Zm-3 8.75a.75.75 0 1 0-1.5 0 .75.75 0 0 0 1.5 0Z"/></svg>
<div class="a side" style="left:707.3px;top:223.4px"><b>10</b> forks</div>
<div class="a side" style="left:693.6px;top:237.7px">Report repository</div>
<div class="sep" style="top:255px"></div>
<div class="a sh" style="left:693.8px;top:265.8px">Releases</div>
<div class="a" style="left:693.5px;top:282.8px;font-size:6.2px;line-height:10px;color:#59636e">No releases published</div>
<div class="sep" style="top:300.2px"></div>
<div class="a sh" style="left:693.8px;top:310.5px">Packages</div>
<div class="a" style="left:693.5px;top:328px;font-size:6.2px;line-height:10px;color:#59636e">No packages published</div>
<div class="sep" style="top:345.3px"></div>
<div class="a sh" style="left:693.5px;top:355.3px">Contributors</div>
<div class="cnt" style="left:743.7px;top:355.7px;width:9.6px;height:8.4px;line-height:8.4px;font-weight:400;font-size:6.6px">3</div>
<svg class="a" style="left:693.1px;top:373.5px" width="16.4" height="16.4" viewBox="0 0 420 420"><clipPath id="c693.1373.5"><circle cx="210" cy="210" r="210"/></clipPath><g clip-path="url(#c693.1373.5)"><rect width="420" height="420" fill="#f0f0f0"/><path d="M105 35h70v70h-70ZM175 35h70v70h-70ZM245 35h70v70h-70ZM35 105h70v70h-70ZM315 105h70v70h-70ZM35 175h70v70h-70ZM315 175h70v70h-70ZM105 245h70v70h-70ZM245 245h70v70h-70ZM35 315h70v70h-70ZM175 315h70v70h-70ZM315 315h70v70h-70Z" fill="#d65cb4"/></g><circle cx="210" cy="210" r="208" fill="none" stroke="#e3e6e9" stroke-width="8"/></svg><div class="a side" style="left:713.1px;top:376.7px;font-weight:700;color:#1f2328">hansjohn</div>
<svg class="a" style="left:693.1px;top:393.5px" width="16.4" height="16.4" viewBox="0 0 420 420"><clipPath id="c693.1393.5"><circle cx="210" cy="210" r="210"/></clipPath><g clip-path="url(#c693.1393.5)"><rect width="420" height="420" fill="#f0f0f0"/><path d="M105 35h70v70h-70ZM175 35h70v70h-70ZM245 35h70v70h-70ZM35 105h70v70h-70ZM105 105h70v70h-70ZM175 105h70v70h-70ZM245 105h70v70h-70ZM315 105h70v70h-70ZM35 175h70v70h-70ZM315 175h70v70h-70ZM35 245h70v70h-70ZM105 245h70v70h-70ZM245 245h70v70h-70ZM315 245h70v70h-70Z" fill="#8cc1dd"/></g><circle cx="210" cy="210" r="208" fill="none" stroke="#e3e6e9" stroke-width="8"/></svg><div class="a side" style="left:713.1px;top:396.7px"><b style="color:#1f2328">R0k1e</b> Haoyu Wang</div>
<svg class="a" style="left:693.1px;top:412.7px" width="16.4" height="16.4" viewBox="0 0 420 420"><clipPath id="c693.1412.7"><circle cx="210" cy="210" r="210"/></clipPath><g clip-path="url(#c693.1412.7)"><rect width="420" height="420" fill="#f0f0f0"/><path d="M35 35h70v70h-70ZM315 35h70v70h-70ZM105 175h70v70h-70ZM175 175h70v70h-70ZM245 175h70v70h-70ZM105 245h70v70h-70ZM245 245h70v70h-70ZM35 315h70v70h-70ZM105 315h70v70h-70ZM245 315h70v70h-70ZM315 315h70v70h-70Z" fill="#4bc26a"/></g><circle cx="210" cy="210" r="208" fill="none" stroke="#e3e6e9" stroke-width="8"/></svg><div class="a side" style="left:713.1px;top:415.9px;font-weight:700;color:#1f2328">shuo-git</div>
<div class="sep" style="top:440.5px"></div>
<div class="a sh" style="left:693.6px;top:450.8px">Languages</div>
<div class="a" style="left:693.2px;top:468.8px;width:146.7px;height:4.2px;border-radius:2.1px;overflow:hidden;background:#fff"><div style="position:absolute;left:0;top:0;width:142.9px;height:4.2px;background:#3572a5"></div><div style="position:absolute;left:143.8px;top:0;width:3px;height:4.2px;background:#89e051"></div></div>
<div class="a" style="left:695.1px;top:479.1px;width:4px;height:4px;border-radius:50%;background:#3572a5"></div>
<div class="a" style="left:705.5px;top:476.1px;font-size:6px;line-height:10px;color:#59636e"><b style="color:#1f2328">Python</b> 98.2%</div>
<div class="a" style="left:757.5px;top:479.1px;width:4px;height:4px;border-radius:50%;background:#89e051"></div>
<div class="a" style="left:768px;top:476.1px;font-size:6px;line-height:10px;color:#59636e"><b style="color:#1f2328">Shell</b> 1.8%</div>
</div></body></html>
